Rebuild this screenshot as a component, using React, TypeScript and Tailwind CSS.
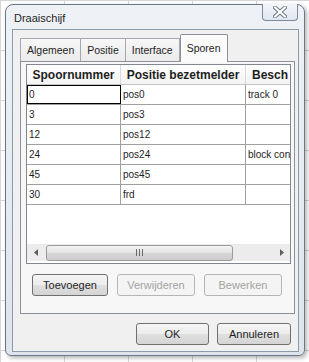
import * as React from 'react'

const rows = [
  ['0', 'pos0', 'track 0'],
  ['3', 'pos3', ''],
  ['12', 'pos12', ''],
  ['24', 'pos24', 'block con'],
  ['45', 'pos45', ''],
  ['30', 'frd', ''],
]

function CloseButton() {
  return (
    <div className="-mt-px w-[36px] h-[17px] rounded-b-[4px] border border-t-0 border-[#7d8a99] bg-[linear-gradient(#f3f6f9,#dfe6ee)] flex items-center justify-center">
      <svg width="14" height="12" viewBox="0 0 14 12">
        <path d="M2 1.5 L12 10.5 M12 1.5 L2 10.5" stroke="#6f7b88" strokeWidth="4" strokeLinecap="square" fill="none" />
        <path d="M2 1.5 L12 10.5 M12 1.5 L2 10.5" stroke="#ffffff" strokeWidth="2" strokeLinecap="square" fill="none" />
      </svg>
    </div>
  )
}

function Tab({ label, active }: { label: string; active?: boolean }) {
  if (active) {
    return (
      <div className="relative -mb-px h-[28px] px-[6px] pt-[6px] border border-b-0 border-[#8c9099] bg-[#fbfbfb] text-[10.5px] text-[#1e1e1e] rounded-t-[2px]">
        {label}
      </div>
    )
  }
  return (
    <div className="h-[23px] px-[6px] pt-[4px] border-y border-r border-[#a4a7ae] border-b-0 bg-[linear-gradient(#f7f7f7,#ebebeb)] text-[10.5px] text-[#1e1e1e] first:border-l">
      {label}
    </div>
  )
}

function Button({ label, disabled, className }: { label: string; disabled?: boolean; className?: string }) {
  return (
    <div
      className={`h-[22px] rounded-[3px] border flex items-center justify-center text-[11px] ${
        disabled
          ? 'border-[#b5b5b5] bg-[#f4f4f4] text-[#a3a3a3]'
          : 'border-[#707070] bg-[linear-gradient(#f4f4f4_0%,#ededed_50%,#e0e0e0_51%,#d4d4d4_100%)] text-[#1e1e1e]'
      } ${className ?? ''}`}
    >
      {label}
    </div>
  )
}

function Cell({ text }: { text: string }) {
  return (
    <div className="h-full flex items-center px-[2px] text-[10px] text-[#1e1e1e] overflow-hidden whitespace-nowrap">
      {text}
    </div>
  )
}

export default function App() {
  return (
    <div className="w-[309px] h-[362px] pt-[4px] pl-[5px] pr-[4px] pb-[6px] bg-white bg-[linear-gradient(#d6d6d6_1px,transparent_1px),linear-gradient(90deg,#d6d6d6_1px,transparent_1px)] bg-[size:64px_50px] font-['Liberation_Sans',Arial,sans-serif]">
      <div className="h-full flex flex-col rounded-t-[8px] rounded-b-[6px] border border-[#6a7786] bg-[linear-gradient(#eef2f6,#dde4ec)] shadow-[2px_2px_4px_rgba(0,0,0,0.3)]">
        {/* title bar */}
        <div className="h-[24px] flex items-start justify-between pl-[8px] pr-[6px]">
          <span className="mt-[5px] text-[11px] text-[#1e1e1e]">Draaischijf</span>
          <CloseButton />
        </div>

        {/* client area */}
        <div className="flex-1 ml-[6px] mr-[5px] mb-[3px] border border-[#8d9aa8] bg-[#f0f0f0] flex flex-col pt-[4px] pl-[7px] pr-[3px]">
          <div className="flex items-end">
            <Tab label="Algemeen" />
            <Tab label="Positie" />
            <Tab label="Interface" />
            <Tab label="Sporen" active />
          </div>

          <div className="h-[253px] border border-[#8c9099] bg-[#f7f7f7] flex flex-col pt-[2px] pl-[5px] pr-[3px]">
            {/* grid */}
            <div className="h-[200px] border border-[#828790] bg-white flex flex-col">
              <div className="h-[20px] flex border-b border-[#c4c4c4] bg-[linear-gradient(#ffffff,#f3f3f3)] text-[12px] font-bold text-[#1e1e1e]">
                <div className="w-[94px] shrink-0 flex items-center justify-center border-r border-[#d8d8d8]">Spoornummer</div>
                <div className="w-[125px] shrink-0 flex items-center justify-center border-r border-[#d8d8d8] whitespace-nowrap">Positie bezetmelder</div>
                <div className="flex-1 min-w-0 flex items-center pl-[6px] whitespace-nowrap">Besch</div>
              </div>
              {rows.map((r, i) => (
                <div key={i} className="h-[20px] flex border-b border-[#a0a0a0]">
                  <div className={`w-[94px] shrink-0 h-full border-r border-[#a0a0a0] ${i === 0 ? 'outline outline-1 -outline-offset-1 outline-black' : ''}`}>
                    <Cell text={r[0]} />
                  </div>
                  <div className="w-[125px] shrink-0 h-full border-r border-[#a0a0a0]">
                    <Cell text={r[1]} />
                  </div>
                  <div className="flex-1 min-w-0 h-full">
                    <Cell text={r[2]} />
                  </div>
                </div>
              ))}
              <div className="flex-1" />
              {/* horizontal scrollbar */}
              <div className="h-[17px] flex items-center bg-[#ececec] mb-[2px]">
                <div className="w-[17px] h-full flex items-center justify-center">
                  <svg width="4" height="7" viewBox="0 0 4 7"><path d="M4 0 L0 3.5 L4 7 Z" fill="#606060" /></svg>
                </div>
                <div className="w-[187px] h-[16px] ml-[2px] rounded-[3px] border border-[#9b9b9b] bg-[linear-gradient(#f4f4f4,#e2e2e2_50%,#d6d6d6_51%,#cdcdcd)] flex items-center justify-center gap-[2px]">
                  <span className="w-px h-[7px] bg-[#6a6a6a]" />
                  <span className="w-px h-[7px] bg-[#6a6a6a]" />
                  <span className="w-px h-[7px] bg-[#6a6a6a]" />
                </div>
                <div className="flex-1" />
                <div className="w-[17px] h-full flex items-center justify-center">
                  <svg width="4" height="7" viewBox="0 0 4 7"><path d="M0 0 L4 3.5 L0 7 Z" fill="#606060" /></svg>
                </div>
              </div>
            </div>

            <div className="mt-[10px] flex gap-[9px] pl-[6px]">
              <Button label="Toevoegen" className="w-[76px]" />
              <Button label="Verwijderen" disabled className="w-[78px]" />
              <Button label="Bewerken" disabled className="w-[78px]" />
            </div>
          </div>

          <div className="mt-[9px] flex justify-end gap-[8px] pr-[4px]">
            <Button label="OK" className="w-[73px]" />
            <Button label="Annuleren" className="w-[74px]" />
          </div>
        </div>
      </div>
    </div>
  )
}
